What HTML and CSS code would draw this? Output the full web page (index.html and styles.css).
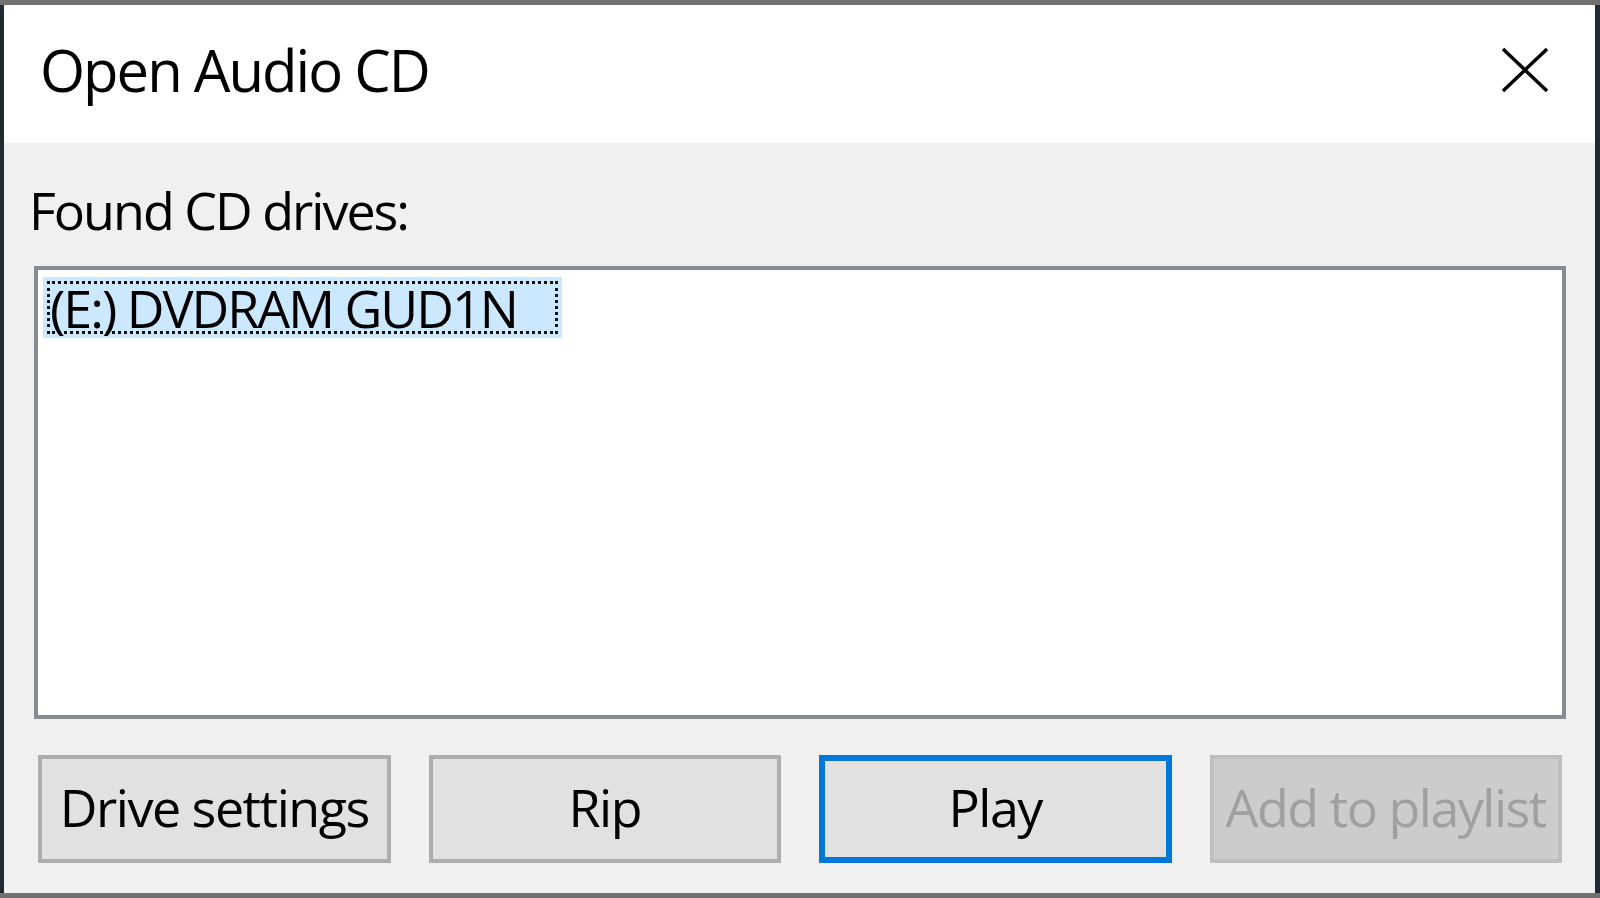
FILE: index.html
```html
<!DOCTYPE html>
<html lang="en">

<head>
    <meta charset="UTF-8">
    <title>Open Audio CD</title>
    <link rel="stylesheet" href="styles.css">
</head>

<body>
    <div class="dialog">
        <!-- title bar -->
        <div class="titlebar">
            <span class="title">Open Audio CD</span>
            <svg class="close" width="48" height="46" viewBox="0 0 48 46">
                <path d="M2 2 L46 44 M46 2 L2 44" stroke="#000" stroke-width="3.5" fill="none" />
            </svg>
        </div>

        <!-- content -->
        <div class="content">
            <p class="label">Found CD drives:</p>
            <div class="listbox">
                <div class="item"><span>(E:) DVDRAM GUD1N</span></div>
            </div>
            <div class="buttons">
                <button class="btn">Drive settings</button>
                <button class="btn">Rip</button>
                <button class="btn default">Play</button>
                <button class="btn" disabled>Add to playlist</button>
            </div>
        </div>
    </div>
</body>

</html>
```

FILE: styles.css
```css
* {
    margin: 0;
    padding: 0;
    box-sizing: border-box;
}

body {
    background: linear-gradient(#717171 0 5px, #1f2a33 5px);
    font-family: "Open Sans", "Noto Sans", sans-serif;
    color: #000;
}

.dialog {
    display: flex;
    height: 888px;
    margin: 5px 5px 0 4px;
    background: #f0f0f0;
    flex-direction: column;
}

.titlebar {
    display: flex;
    height: 138px;
    padding: 0 46px 8px 36px;
    background: #fff;
    align-items: center;
    justify-content: space-between;
}

.title {
    font-size: 58px;
    letter-spacing: -2px;
    line-height: 1;
}

.content {
    padding: 0 29px 0 30px;
}

.label {
    margin: 22px 0 0 -5px;
    font-size: 52px;
    letter-spacing: -2px;
    line-height: 90px;
}

.listbox {
    height: 453px;
    margin-top: 11px;
    padding: 7px 5px;
    border: 4px solid #868a91;
    background: #fff;
}

.item {
    display: inline-block;
    width: 519px;
    height: 61px;
    padding: 4px;
    background: #cce8ff;
}

.item span {
    display: block;
    height: 100%;
    border: 3px dotted #111;
    font-size: 52px;
    letter-spacing: -2px;
    line-height: 48px;
}

.buttons {
    display: grid;
    margin: 36px 4px 0;
    grid-template-columns: repeat(4, 1fr);
    gap: 38px;
}

.btn {
    height: 108px;
    padding-bottom: 6px;
    border: 4px solid #adadad;
    background: #e1e1e1;
    font-family: inherit;
    font-size: 52px;
    letter-spacing: -1.5px;
    color: #000;
}

.default {
    border: 6px solid #0078d7;
}

.btn:disabled {
    border-color: #bfbfbf;
    background: #cccccc;
    color: #a0a0a0;
}
```
